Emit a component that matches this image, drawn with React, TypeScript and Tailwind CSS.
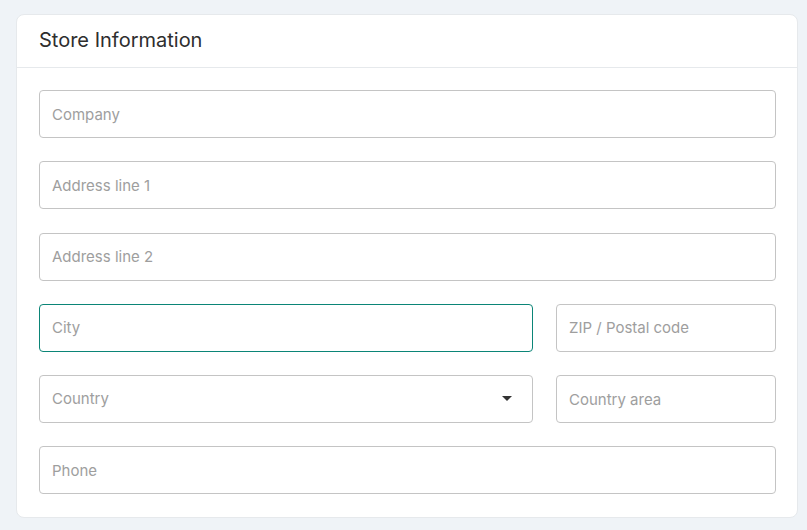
import React from "react";

const inputCls =
  "h-[48px] w-full rounded-[4px] border border-[#c4c4c4] bg-white px-[12px] text-[15px] text-[#333] placeholder:text-[#9e9e9e] outline-none";

function Field({ placeholder, focused }: { placeholder: string; focused?: boolean }) {
  return (
    <input
      className={
        focused
          ? "h-[48px] w-full rounded-[4px] border border-[#0b8577] bg-white px-[12px] text-[15px] text-[#333] placeholder:text-[#9e9e9e] outline-none"
          : inputCls
      }
      placeholder={placeholder}
    />
  );
}

export default function App() {
  return (
    <div
      className="min-h-[530px] w-full bg-[#eff3f7] pl-[16px] pt-[14px] pb-[12px] pr-[9px]"
      style={{ fontFamily: "Inter, 'Noto Sans', sans-serif" }}
    >
      <div className="rounded-[8px] border border-[#e6e9ec] bg-white">
        <div className="flex h-[53px] items-center border-b border-[#e6e9ec] px-[22px] pb-[2px]">
          <h2 className="text-[20px] font-normal leading-none text-[#2e2e2e]">Store Information</h2>
        </div>
        <div className="flex flex-col gap-[23.3px] pl-[22px] pr-[21px] pt-[22px] pb-[23px]">
          <Field placeholder="Company" />
          <Field placeholder="Address line 1" />
          <Field placeholder="Address line 2" />
          <div className="grid grid-cols-[1fr_220px] gap-[23px]">
            <Field placeholder="City" focused />
            <Field placeholder="ZIP / Postal code" />
          </div>
          <div className="grid grid-cols-[1fr_220px] gap-[23px]">
            <div className="relative flex h-[48px] items-center rounded-[4px] border border-[#c4c4c4] bg-white px-[12px] text-[15px] text-[#9e9e9e]">
              <span>Country</span>
              <svg
                className="absolute right-[20px] top-[20px]"
                width="10"
                height="5"
                viewBox="0 0 10 5"
              >
                <path d="M0 0 L10 0 L5 5 Z" fill="#333" />
              </svg>
            </div>
            <Field placeholder="Country area" />
          </div>
          <Field placeholder="Phone" />
        </div>
      </div>
    </div>
  );
}
